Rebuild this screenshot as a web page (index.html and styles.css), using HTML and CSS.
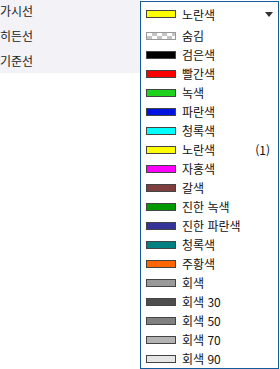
FILE: index.html
```html
<!DOCTYPE html>
<html lang="ko">
<head>
    <meta charset="UTF-8">
    <meta name="viewport" content="width=device-width, initial-scale=1.0">
    <title>선 색상</title>
    <link rel="stylesheet" href="styles.css">
</head>

<body>
    <div class="props">
        <div class="prop-row">가시선</div>
        <div class="prop-row">히든선</div>
        <div class="prop-row">기준선</div>
    </div>

    <div class="dropdown">
        <div class="dropdown-head">
            <span class="swatch" style="background-color: #ffff00"></span>
            <span class="label">노란색</span>
            <span class="arrow"></span>
        </div>
        <ul class="color-list">
            <li><span class="swatch checker"></span><span class="label">숨김</span></li>
            <li><span class="swatch" style="background-color: #000000"></span><span class="label">검은색</span></li>
            <li><span class="swatch" style="background-color: #ff0000"></span><span class="label">빨간색</span></li>
            <li><span class="swatch" style="background-color: #1ed21e"></span><span class="label">녹색</span></li>
            <li><span class="swatch" style="background-color: #0012e0"></span><span class="label">파란색</span></li>
            <li><span class="swatch" style="background-color: #00ffff"></span><span class="label">청록색</span></li>
            <li><span class="swatch" style="background-color: #ffff00"></span><span class="label">노란색</span><span class="count">(1)</span></li>
            <li><span class="swatch" style="background-color: #ff00ff"></span><span class="label">자홍색</span></li>
            <li><span class="swatch" style="background-color: #7f3f3f"></span><span class="label">갈색</span></li>
            <li><span class="swatch" style="background-color: #009900"></span><span class="label">진한 녹색</span></li>
            <li><span class="swatch" style="background-color: #333399"></span><span class="label">진한 파란색</span></li>
            <li><span class="swatch" style="background-color: #008080"></span><span class="label">청록색</span></li>
            <li><span class="swatch" style="background-color: #ff6600"></span><span class="label">주황색</span></li>
            <li><span class="swatch" style="background-color: #999999"></span><span class="label">회색</span></li>
            <li><span class="swatch" style="background-color: #4d4d4d"></span><span class="label">회색 30</span></li>
            <li><span class="swatch" style="background-color: #808080"></span><span class="label">회색 50</span></li>
            <li><span class="swatch" style="background-color: #b3b3b3"></span><span class="label">회색 70</span></li>
            <li><span class="swatch" style="background-color: #e6e6e6"></span><span class="label">회색 90</span></li>
        </ul>
    </div>
</body>

</html>
```

FILE: styles.css
```css
body {
    font-family: "Noto Sans CJK KR", "Noto Sans", sans-serif;
    font-size: 12px;
    color: #111;
    background-color: #fff;
    margin: 0;
    padding: 0;
    display: flex;
    align-items: flex-start;
}

.props {
    width: 140px;
    height: 73px;
    background-color: #f2f2f7;
    flex-shrink: 0;
}

.prop-row {
    height: 25px;
    line-height: 22px;
    color: #222;
}

.dropdown {
    width: 137px;
    height: 366px;
    margin-top: 1px;
    border: 1px solid #135b9b;
    background-color: #fff;
}

.dropdown-head {
    height: 24px;
    display: flex;
    align-items: center;
    padding: 0 5px;
}

.swatch {
    display: inline-block;
    width: 28px;
    height: 6px;
    border: 1px solid #444;
    margin-right: 6px;
    flex-shrink: 0;
}

.checker {
    border-color: #999;
    background-color: #fff;
    background-image: conic-gradient(#c4c4c4 25%, #fff 0 50%, #c4c4c4 0 75%, #fff 0);
    background-size: 10px 6px;
}

.arrow {
    margin-left: auto;
    width: 0;
    height: 0;
    border-left: 4px solid transparent;
    border-right: 4px solid transparent;
    border-top: 5px solid #333;
}

.color-list {
    list-style: none;
    margin: 0;
    padding: 0;
}

.color-list li {
    height: 19px;
    display: flex;
    align-items: center;
    padding: 0 8px 0 5px;
}

.count {
    margin-left: auto;
}
```
